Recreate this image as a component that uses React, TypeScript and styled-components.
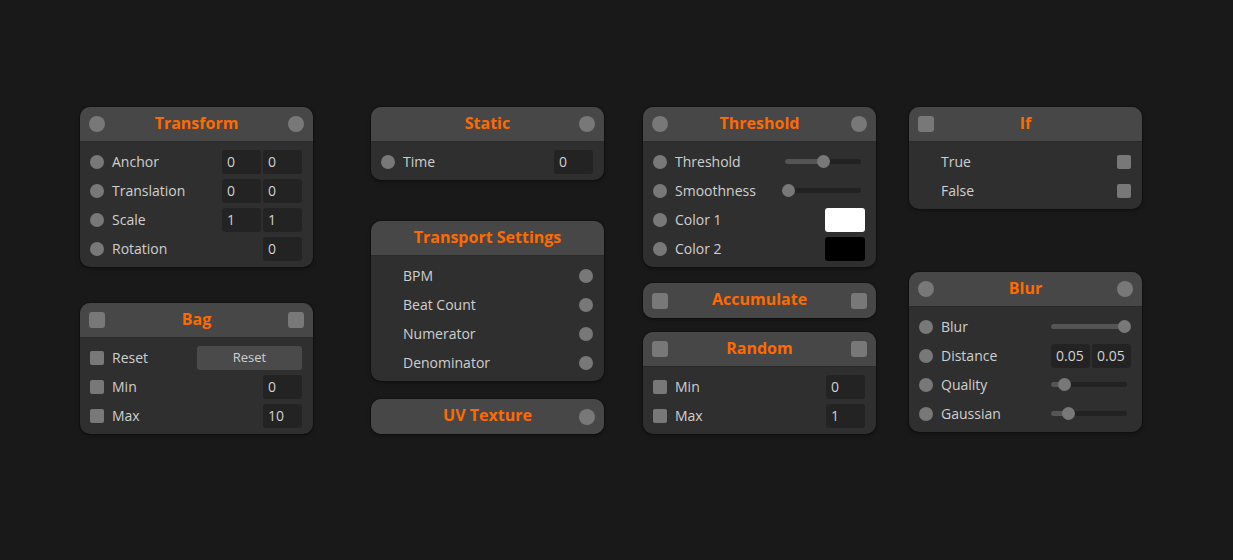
import { FC } from 'react'
import styled, { createGlobalStyle } from 'styled-components'

const GlobalStyle = createGlobalStyle`
  html, body {
    margin: 0;
    padding: 0;
    background: #191919;
  }
  body {
    font-family: 'Open Sans', 'Noto Sans', sans-serif;
  }
`

const Canvas = styled.div`
  position: relative;
  width: 1233px;
  height: 560px;
  background: #191919;
  overflow: hidden;
`

// nodes sit on a free canvas, so their place is the content itself
const NodeBox = styled.div<{ $x: number; $y: number }>`
  position: absolute;
  left: ${(p) => p.$x}px;
  top: ${(p) => p.$y}px;
  width: 233px;
  border-radius: 10px;
  overflow: hidden;
  background: #2f2f2f;
  box-shadow: 0 0 0 1px rgba(0, 0, 0, 0.2), 0 2px 4px rgba(0, 0, 0, 0.3);
`

const Header = styled.div<{ $withBody: boolean }>`
  display: grid;
  grid-template-columns: 16px 1fr 16px;
  align-items: center;
  height: 35px;
  box-sizing: border-box;
  padding: 0 9px;
  background: #474747;
  border-bottom: ${(p) => (p.$withBody ? '1px solid #2a2a2a' : 'none')};
`

const Title = styled.div`
  text-align: center;
  color: #ff6a00;
  font-weight: 700;
  font-size: 16px;
  line-height: 1;
  margin-top: -3px;
`

const Socket = styled.span<{ $square?: boolean; $big?: boolean; $hidden?: boolean }>`
  display: block;
  flex: none;
  width: ${(p) => (p.$big ? 16 : 14)}px;
  height: ${(p) => (p.$big ? 16 : 14)}px;
  border-radius: ${(p) => (p.$square ? (p.$big ? '3px' : '2px') : '50%')};
  background: #787878;
  visibility: ${(p) => (p.$hidden ? 'hidden' : 'visible')};
`

const Body = styled.div`
  padding: 5px 0 4px;
`

const Row = styled.div`
  display: flex;
  align-items: center;
  height: 29px;
  padding: 0 11px 0 10px;
`

const Label = styled.span`
  flex: 1;
  margin-left: 8px;
  color: #cfcfcf;
  font-size: 14px;
  white-space: nowrap;
`

const Fields = styled.div`
  display: flex;
  gap: 2px;
`

const NumField = styled.div`
  width: 39px;
  height: 24px;
  box-sizing: border-box;
  padding-left: 5px;
  border-radius: 3px;
  background: #232323;
  color: #d2d2d2;
  font-size: 14px;
  line-height: 24px;
`

const ActionButton = styled.div`
  width: 105px;
  height: 24px;
  border-radius: 3px;
  background: #4a4a4a;
  color: #cfcfcf;
  font-size: 13px;
  line-height: 22px;
  text-align: center;
`

const Swatch = styled.div<{ $color: string }>`
  width: 40px;
  height: 24px;
  border-radius: 3px;
  background: ${(p) => p.$color};
`

const Track = styled.div`
  position: relative;
  width: 76px;
  height: 5px;
  margin-right: 4px;
  border-radius: 3px;
  background: #222;
`

const TrackFill = styled.div`
  position: absolute;
  left: 0;
  top: 0;
  bottom: 0;
  border-radius: 3px;
  background: #555;
`

const Thumb = styled.div`
  position: absolute;
  top: 50%;
  width: 13px;
  height: 13px;
  margin: -6.5px 0 0 -6.5px;
  border-radius: 50%;
  background: #787878;
`

type Control =
  | { kind: 'num'; values: string[] }
  | { kind: 'slider'; value: number }
  | { kind: 'color'; color: string }
  | { kind: 'button'; text: string }
  | { kind: 'out' }

interface IRow {
  label: string
  control: Control
}

interface INode {
  title: string
  x: number
  y: number
  square?: boolean
  inSocket?: boolean
  outSocket?: boolean
  rows?: IRow[]
}

const num = (...values: string[]): Control => ({ kind: 'num', values })
const slider = (value: number): Control => ({ kind: 'slider', value })
const out: Control = { kind: 'out' }

const NODES: INode[] = [
  {
    title: 'Transform',
    x: 80,
    y: 107,
    inSocket: true,
    outSocket: true,
    rows: [
      { label: 'Anchor', control: num('0', '0') },
      { label: 'Translation', control: num('0', '0') },
      { label: 'Scale', control: num('1', '1') },
      { label: 'Rotation', control: num('0') }
    ]
  },
  {
    title: 'Bag',
    x: 80,
    y: 303,
    square: true,
    inSocket: true,
    outSocket: true,
    rows: [
      { label: 'Reset', control: { kind: 'button', text: 'Reset' } },
      { label: 'Min', control: num('0') },
      { label: 'Max', control: num('10') }
    ]
  },
  {
    title: 'Static',
    x: 371,
    y: 107,
    outSocket: true,
    rows: [{ label: 'Time', control: num('0') }]
  },
  {
    title: 'Transport Settings',
    x: 371,
    y: 221,
    rows: [
      { label: 'BPM', control: out },
      { label: 'Beat Count', control: out },
      { label: 'Numerator', control: out },
      { label: 'Denominator', control: out }
    ]
  },
  { title: 'UV Texture', x: 371, y: 399, outSocket: true },
  {
    title: 'Threshold',
    x: 643,
    y: 107,
    inSocket: true,
    outSocket: true,
    rows: [
      { label: 'Threshold', control: slider(0.5) },
      { label: 'Smoothness', control: slider(0) },
      { label: 'Color 1', control: { kind: 'color', color: '#ffffff' } },
      { label: 'Color 2', control: { kind: 'color', color: '#000000' } }
    ]
  },
  { title: 'Accumulate', x: 643, y: 283, square: true, inSocket: true, outSocket: true },
  {
    title: 'Random',
    x: 643,
    y: 332,
    square: true,
    inSocket: true,
    outSocket: true,
    rows: [
      { label: 'Min', control: num('0') },
      { label: 'Max', control: num('1') }
    ]
  },
  {
    title: 'If',
    x: 909,
    y: 107,
    square: true,
    inSocket: true,
    rows: [
      { label: 'True', control: out },
      { label: 'False', control: out }
    ]
  },
  {
    title: 'Blur',
    x: 909,
    y: 272,
    inSocket: true,
    outSocket: true,
    rows: [
      { label: 'Blur', control: slider(1) },
      { label: 'Distance', control: num('0.05', '0.05') },
      { label: 'Quality', control: slider(0.15) },
      { label: 'Gaussian', control: slider(0.2) }
    ]
  }
]

const Slider: FC<{ value: number }> = ({ value }) => {
  const pos = 3 + value * 70
  return (
    <Track>
      <TrackFill style={{ width: pos }} />
      <Thumb style={{ left: pos }} />
    </Track>
  )
}

const ControlView: FC<{ control: Control; square?: boolean }> = ({ control, square }) => {
  switch (control.kind) {
    case 'num':
      return (
        <Fields>
          {control.values.map((v, i) => (
            <NumField key={i}>{v}</NumField>
          ))}
        </Fields>
      )
    case 'slider':
      return <Slider value={control.value} />
    case 'color':
      return <Swatch $color={control.color} />
    case 'button':
      return <ActionButton>{control.text}</ActionButton>
    case 'out':
      return <Socket $square={square} />
  }
}

const Node: FC<{ node: INode }> = ({ node }) => {
  const hasBody = !!node.rows?.length
  return (
    <NodeBox $x={node.x} $y={node.y}>
      <Header $withBody={hasBody}>
        <Socket $big $square={node.square} $hidden={!node.inSocket} />
        <Title>{node.title}</Title>
        <Socket $big $square={node.square} $hidden={!node.outSocket} />
      </Header>
      {hasBody && (
        <Body>
          {node.rows!.map((row) => (
            <Row key={row.label}>
              <Socket $square={node.square} $hidden={row.control.kind === 'out'} />
              <Label>{row.label}</Label>
              <ControlView control={row.control} square={node.square} />
            </Row>
          ))}
        </Body>
      )}
    </NodeBox>
  )
}

const App: FC = () => (
  <>
    <GlobalStyle />
    <Canvas>
      {NODES.map((n) => (
        <Node key={n.title} node={n} />
      ))}
    </Canvas>
  </>
)

export default App
